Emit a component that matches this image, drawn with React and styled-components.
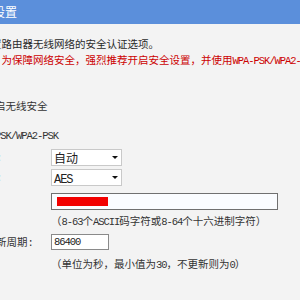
import React from "react";
import styled, { createGlobalStyle } from "styled-components";

const Global = createGlobalStyle`
  html, body {
    margin: 0;
    padding: 0;
    overflow: hidden;
    background: #f3f3f3;
  }
  body {
    font-family: "Noto Sans CJK SC", "Noto Sans", sans-serif;
  }
`;

const Page = styled.div`
  margin-left: -55px;
  width: 560px;
  font-family: "Noto Sans CJK SC", "Noto Sans", sans-serif;
  font-size: 10.5px;
  color: #333;
`;

const Header = styled.div`
  height: 24px;
  background: #5b8fdb;
  color: #fff;
  font-size: 12px;
  line-height: 23px;
  white-space: nowrap;
`;

const Intro = styled.div`
  margin-top: 12px;
`;

const Desc = styled.p`
  margin: 0;
  padding-left: 4px;
  line-height: 16px;
  white-space: nowrap;
  color: ${(p) => (p.$warn ? "#cc0000" : "#2a2a2a")};
`;

const Half = styled.span`
  font-family: "Liberation Mono", monospace;
  letter-spacing: -1.05px;
`;

const Options = styled.div`
  margin-top: 29px;
`;

const RadioRow = styled.label`
  display: flex;
  align-items: center;
  gap: 5px;
  height: 16px;
  padding-left: 13px;
  margin-bottom: ${(p) => p.$gap || 0}px;
  white-space: nowrap;
  line-height: 16px;
`;

const Radio = styled.span`
  width: 11px;
  height: 11px;
  border-radius: 50%;
  border: 1px solid #7a8aa0;
  background: #fff;
  box-sizing: border-box;
  flex: none;
`;

const Form = styled.div`
  margin-top: 3px;
`;

const FormRow = styled.div`
  display: grid;
  grid-template-columns: 97px auto;
  align-items: center;
  height: ${(p) => p.$h}px;
  margin-top: ${(p) => p.$mt || 0}px;
  padding-left: 9px;
  white-space: nowrap;
`;

const Label = styled.span`
  line-height: 16px;
`;

const Select = styled.div`
  position: relative;
  width: 71px;
  height: 17px;
  box-sizing: border-box;
  border: 1px solid #c9c9c9;
  background: #fff;
  font-size: 12px;
  line-height: 15px;
  padding-left: 2px;
  color: #222;
`;

const Arrow = styled.span`
  position: absolute;
  right: 3px;
  top: 6px;
  width: 0;
  height: 0;
  border-left: 3px solid transparent;
  border-right: 3px solid transparent;
  border-top: 3px solid #111;
`;

const Field = styled.div`
  width: ${(p) => p.$w}px;
  height: ${(p) => p.$h}px;
  box-sizing: border-box;
  border: 1px solid ${(p) => p.$border};
  background: ${(p) => p.$bg || "#fff"};
  display: flex;
  align-items: center;
  padding-left: ${(p) => p.$pad || 0}px;
  line-height: 14px;
  color: #222;
`;

const Redacted = styled.span`
  width: 51px;
  height: 9px;
  background: #f20000;
`;

const Hint = styled.span`
  line-height: 16px;
`;

export default function App() {
  return (
    <>
      <Global />
      <Page>
        <Header>无线安全设置</Header>
        <Intro>
          <Desc>本页面设置路由器无线网络的安全认证选项。</Desc>
          <Desc $warn>
            安全提示：为保障网络安全，强烈推荐开启安全设置，并使用
            <Half>WPA-PSK/WPA2-PSK AES</Half>加密方法。
          </Desc>
        </Intro>
        <Options>
          <RadioRow $gap={14}>
            <Radio />
            不开启无线安全
          </RadioRow>
          <RadioRow>
            <Radio />
            <Half>WPA-PSK/WPA2-PSK</Half>
          </RadioRow>
        </Options>
        <Form>
          <FormRow $h={20}>
            <Label>
              认证类型<Half>:</Half>
            </Label>
            <Select>
              自动
              <Arrow />
            </Select>
          </FormRow>
          <FormRow $h={20}>
            <Label>
              加密算法<Half>:</Half>
            </Label>
            <Select>
              <Half>AES</Half>
              <Arrow />
            </Select>
          </FormRow>
          <FormRow $h={22} $mt={3}>
            <Label>
              <Half>PSK</Half>密码<Half>:</Half>
            </Label>
            <Field $w={227} $h={17} $border="#707070" $bg="#fafcff" $pad={5}>
              <Redacted />
            </Field>
          </FormRow>
          <FormRow $h={18}>
            <span />
            <Hint>
              （<Half>8-63</Half>个<Half>ASCII</Half>码字符或<Half>8-64</Half>个十六进制字符）
            </Hint>
          </FormRow>
          <FormRow $h={24}>
            <Label>
              组密钥更新周期<Half>:</Half>
            </Label>
            <Field $w={58} $h={16} $border="#8a8a8a" $pad={2}>
              <Half>86400</Half>
            </Field>
          </FormRow>
          <FormRow $h={20}>
            <span />
            <Hint>
              （单位为秒，最小值为<Half>30</Half>，不更新则为<Half>0</Half>）
            </Hint>
          </FormRow>
        </Form>
      </Page>
    </>
  );
}
